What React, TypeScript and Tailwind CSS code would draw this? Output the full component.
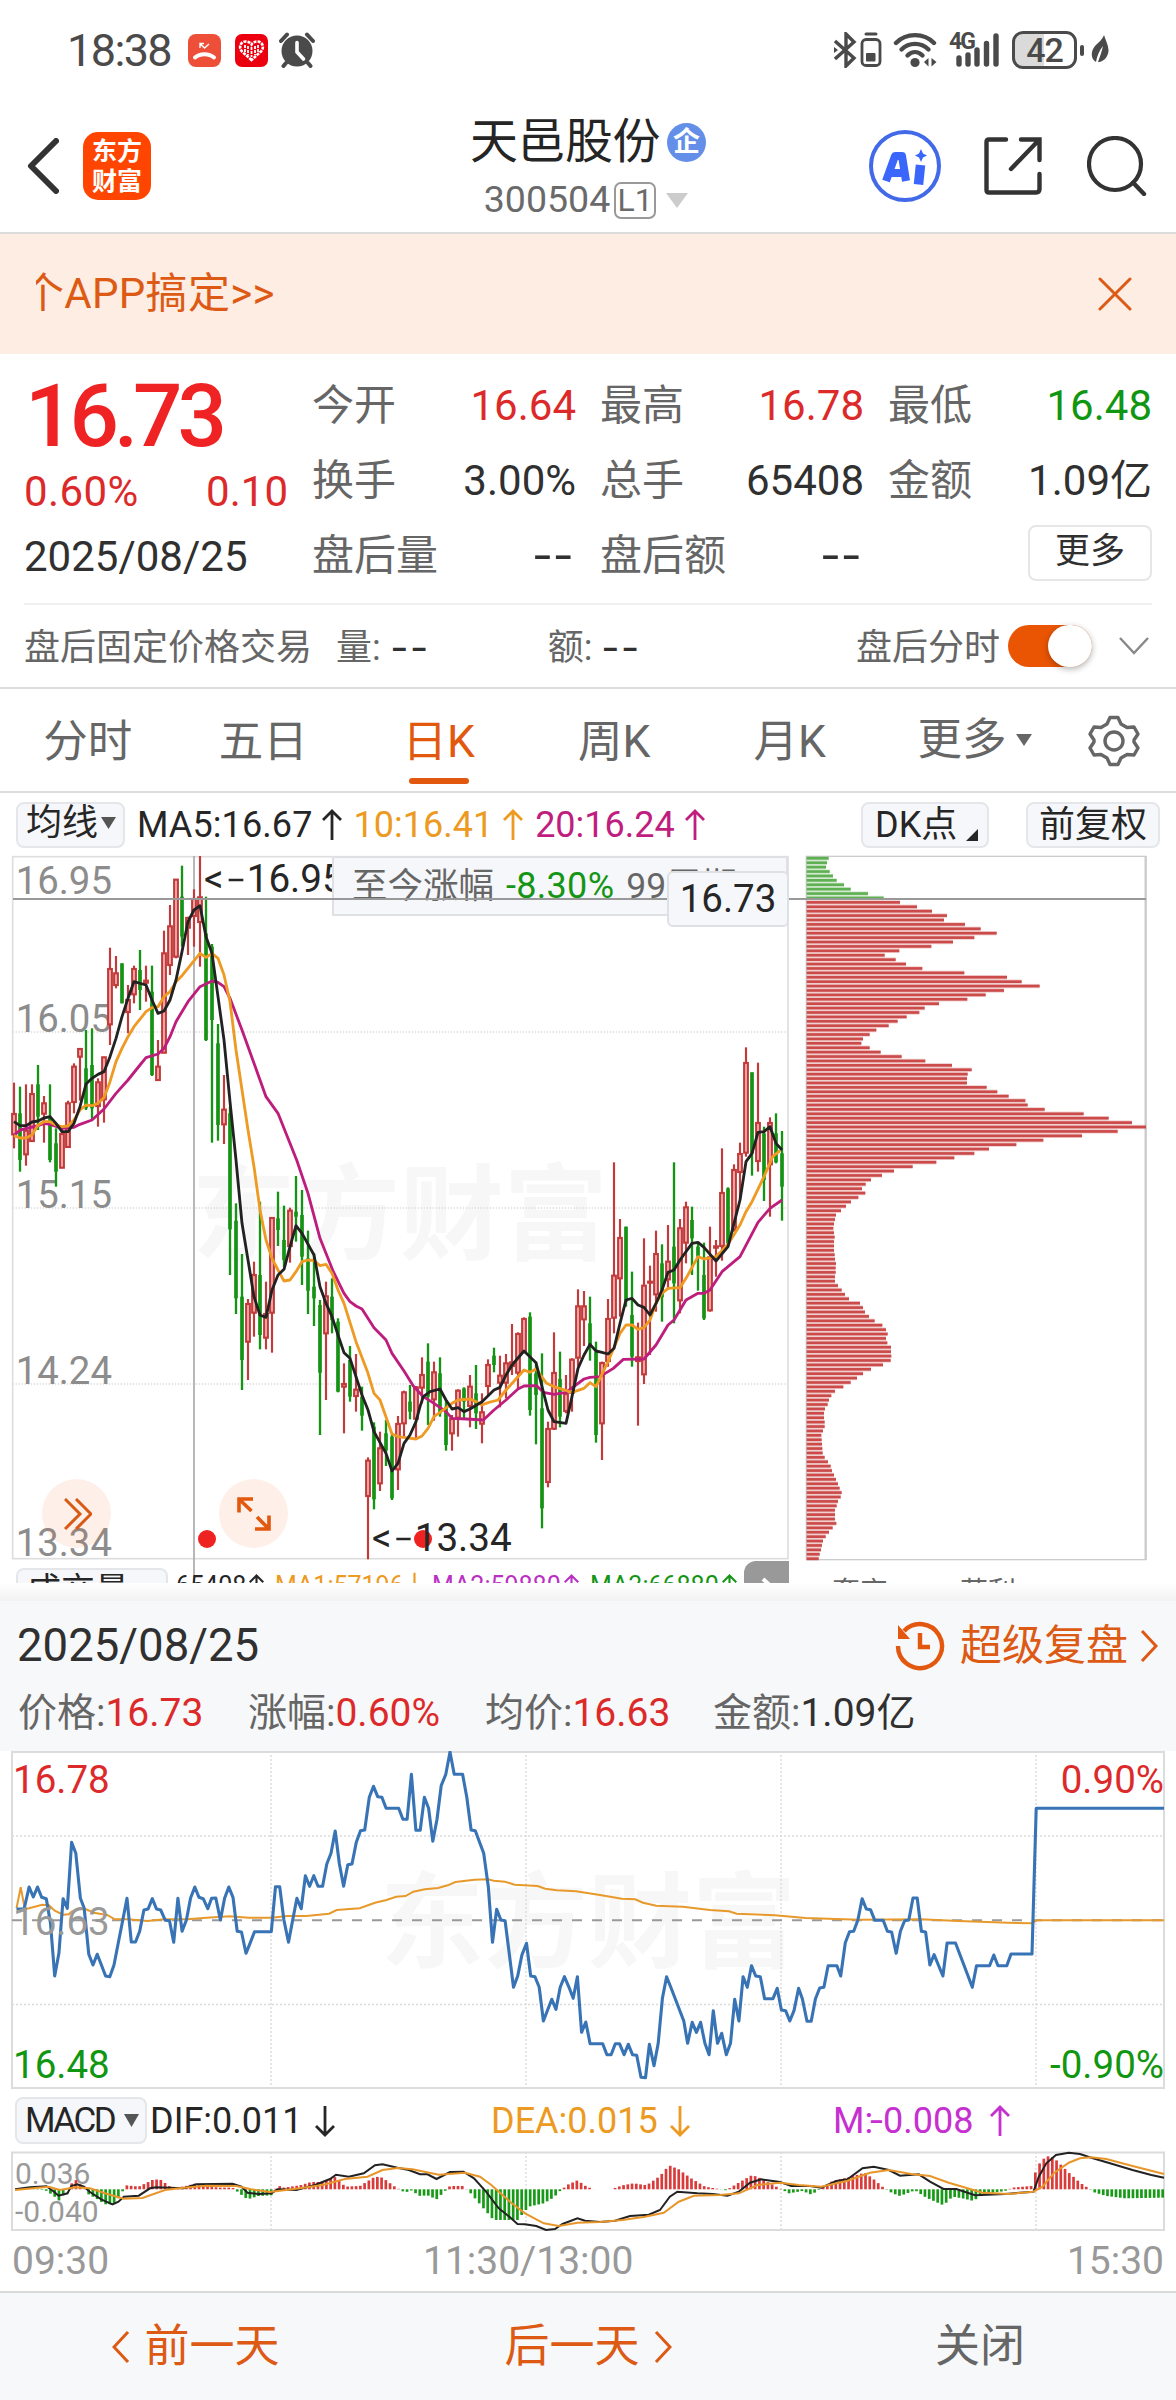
import React, { useState } from "react";

type Point = [number, number];
// high, body top, body bottom, low, rising (1) or falling (0)
type Candle = [number, number, number, number, 0 | 1];

const candles: Candle[] = [
  [1208, 1300, 1365, 1405, 1], [1220, 1300, 1440, 1475, 0], [1213, 1350, 1425, 1457, 1], [1213, 1240, 1385, 1385, 1],
  [1155, 1213, 1310, 1350, 0], [1248, 1268, 1303, 1388, 1], [1213, 1310, 1440, 1447, 0], [1345, 1390, 1475, 1520, 0],
  [1340, 1360, 1465, 1465, 1], [1262, 1268, 1403, 1403, 1], [1150, 1158, 1268, 1300, 1], [1105, 1105, 1132, 1262, 1],
  [1050, 1165, 1285, 1290, 0], [1045, 1155, 1285, 1320, 0], [1195, 1205, 1280, 1340, 1], [1130, 1130, 1260, 1328, 1],
  [803, 865, 1035, 1095, 1], [828, 878, 917, 925, 1], [850, 850, 970, 970, 0], [915, 958, 998, 1060, 1],
  [857, 865, 945, 970, 1], [810, 870, 930, 990, 0], [857, 900, 910, 965, 1], [857, 935, 1185, 1188, 0],
  [1080, 1158, 1202, 1202, 1], [752, 818, 1120, 1120, 1], [675, 737, 857, 885, 1], [597, 597, 832, 835, 1],
  [557, 650, 770, 800, 0], [710, 712, 745, 825, 1], [628, 655, 710, 800, 1], [528, 650, 728, 860, 1],
  [650, 760, 1080, 1083, 0], [792, 800, 1020, 1388, 0], [1032, 1090, 1335, 1382, 0], [1185, 1287, 1335, 1392, 1],
  [1280, 1300, 1648, 1785, 0], [1570, 1622, 1855, 1902, 0], [1722, 1850, 2040, 2130, 0], [1857, 1870, 1987, 2100, 1],
  [1745, 1783, 1900, 1970, 1], [1565, 1785, 1965, 2008, 0], [1805, 1900, 1975, 2008, 1], [1612, 1612, 1900, 2018, 1],
  [1535, 1615, 1650, 1698, 0], [1577, 1680, 1740, 1760, 0], [1583, 1590, 1700, 1748, 1], [1488, 1595, 1610, 1685, 0],
  [1530, 1605, 1730, 1815, 0], [1652, 1735, 1832, 1902, 0], [1720, 1820, 1855, 1938, 0], [1860, 1875, 2078, 2265, 0],
  [1805, 1847, 1962, 2160, 1], [1795, 1850, 1920, 1960, 0], [1915, 1925, 2135, 2137, 0], [2050, 2110, 2122, 2260, 1],
  [1998, 2040, 2150, 2165, 0], [2022, 2127, 2150, 2195, 1], [2120, 2150, 2207, 2252, 0], [2332, 2340, 2450, 2638, 1],
  [2227, 2240, 2458, 2488, 0], [2255, 2303, 2412, 2433, 1], [2220, 2260, 2312, 2358, 0], [2262, 2270, 2455, 2460, 0],
  [2208, 2230, 2370, 2430, 1], [2132, 2135, 2232, 2270, 1], [2115, 2165, 2195, 2218, 0], [2118, 2120, 2218, 2280, 1],
  [2032, 2083, 2125, 2170, 1], [1990, 2045, 2150, 2235, 0], [2045, 2075, 2160, 2222, 1], [2032, 2080, 2200, 2210, 0],
  [2160, 2180, 2295, 2312, 0], [2205, 2215, 2262, 2312, 1], [2128, 2130, 2215, 2270, 1], [2122, 2125, 2165, 2215, 0],
  [2085, 2118, 2180, 2242, 1], [2055, 2140, 2200, 2247, 0], [2140, 2195, 2233, 2290, 1], [2038, 2053, 2120, 2150, 1],
  [2003, 2027, 2055, 2077, 0], [2027, 2085, 2110, 2182, 1], [2022, 2048, 2110, 2155, 1], [1932, 2045, 2060, 2085, 1],
  [1957, 1960, 2080, 2125, 1], [1912, 1915, 2017, 2020, 1], [1897, 1910, 2190, 2207, 0], [2045, 2080, 2145, 2293, 0],
  [2020, 2185, 2485, 2545, 0], [2225, 2245, 2408, 2422, 1], [1957, 2077, 2248, 2250, 1], [2015, 2097, 2210, 2242, 0],
  [2085, 2140, 2195, 2200, 1], [2035, 2037, 2140, 2195, 1], [1828, 1877, 2035, 2060, 1], [1833, 1877, 1920, 1998, 1],
  [1850, 1930, 2000, 2042, 0], [1985, 2015, 2265, 2288, 0], [2045, 2047, 2232, 2340, 1], [1857, 1915, 2045, 2060, 1],
  [1447, 1785, 1915, 1960, 1], [1617, 1672, 1797, 1910, 1], [1640, 1640, 1865, 1880, 0], [1775, 1905, 2030, 2060, 0],
  [1928, 2030, 2045, 2237, 1], [1675, 1815, 2085, 2112, 1], [1757, 1803, 1805, 2025, 1], [1652, 1720, 1845, 1895, 1],
  [1693, 1750, 1852, 1925, 0], [1635, 1743, 1800, 1830, 1], [1447, 1700, 1810, 1930, 0], [1617, 1643, 1863, 1900, 1],
  [1565, 1580, 1690, 1750, 1], [1580, 1620, 1675, 1785, 0], [1690, 1700, 1730, 1832, 0], [1688, 1785, 1915, 1920, 0],
  [1640, 1730, 1893, 1895, 1], [1680, 1697, 1705, 1790, 1], [1405, 1537, 1700, 1742, 1], [1522, 1525, 1690, 1700, 0],
  [1453, 1468, 1650, 1655, 1], [1388, 1420, 1478, 1560, 1], [1102, 1147, 1420, 1430, 1], [1177, 1177, 1420, 1487, 0],
  [1148, 1327, 1445, 1475, 1], [1340, 1360, 1500, 1563, 0], [1312, 1327, 1455, 1610, 1], [1300, 1360, 1447, 1450, 0],
  [1353, 1420, 1520, 1622, 0],
];

const ma5 =
  "42,1325 60,1337 78,1337 96,1326 114,1323 132,1314 150,1310 168,1330 186,1355 204,1355 222,1330 240,1280 258,1212 276,1195 294,1183 312,1175 330,1130 348,1075 366,1010 384,955 402,905 438,915 456,960 474,1000 492,993 510,960 528,900 546,815 564,725 582,690 600,677 618,770 636,820 654,950 672,1080 690,1265 708,1440 726,1630 744,1740 762,1850 780,1905 798,1912 816,1830 834,1785 852,1768 870,1700 888,1637 906,1660 942,1725 960,1820 978,1870 996,1910 1014,1965 1032,2018 1050,2035 1086,2145 1104,2190 1122,2255 1158,2320 1176,2373 1194,2350 1212,2290 1230,2265 1248,2225 1260,2180 1270,2150 1290,2135 1320,2127 1338,2160 1356,2187 1374,2183 1392,2195 1410,2187 1446,2165 1482,2130 1500,2122 1518,2085 1536,2055 1572,2013 1608,2048 1626,2120 1644,2190 1662,2225 1698,2230 1716,2150 1734,2065 1752,2025 1770,1993 1788,2013 1806,2017 1824,2022 1842,2005 1860,1930 1878,1860 1896,1855 1914,1875 1932,1882 1950,1905 1968,1870 1986,1830 2004,1777 2022,1770 2040,1740 2076,1690 2094,1687 2112,1702 2148,1743 2184,1700 2202,1630 2220,1560 2238,1445 2256,1420 2274,1357 2292,1355 2310,1340 2328,1390 2346,1410";
const ma10 =
  "42,1367 60,1374 78,1374 96,1365 114,1335 132,1325 150,1325 168,1335 186,1340 204,1338 222,1320 240,1290 258,1275 276,1277 294,1270 312,1253 330,1205 348,1145 366,1105 384,1070 402,1040 438,995 456,983 474,980 492,950 510,935 528,905 546,887 600,820 618,832 636,820 654,835 672,885 690,965 708,1110 726,1230 744,1350 762,1460 780,1590 798,1680 816,1735 834,1770 852,1803 870,1800 888,1775 906,1745 924,1740 942,1742 960,1757 978,1753 996,1780 1014,1830 1032,1870 1068,1985 1104,2080 1122,2140 1140,2160 1176,2262 1194,2270 1248,2277 1266,2268 1284,2245 1302,2210 1320,2197 1356,2170 1374,2160 1410,2157 1428,2165 1446,2175 1464,2168 1494,2160 1518,2130 1572,2070 1590,2077 1608,2067 1640,2110 1662,2120 1716,2137 1752,2125 1770,2108 1788,2120 1824,2045 1860,1960 1878,1935 1896,1935 1914,1948 1932,1943 1950,1920 1968,1870 1986,1840 2004,1825 2040,1823 2058,1795 2094,1730 2112,1737 2148,1730 2184,1693 2220,1635 2238,1595 2256,1565 2292,1490 2318,1430 2340,1412";
const ma20 =
  "42,1367 60,1350 114,1337 132,1330 150,1333 186,1345 222,1342 240,1333 276,1320 312,1287 348,1240 384,1200 420,1155 438,1133 474,1122 492,1105 510,1070 528,1025 564,965 600,920 636,903 654,907 672,920 690,955 726,1050 762,1150 798,1250 834,1300 890,1440 924,1540 960,1675 1000,1775 1032,1840 1050,1865 1068,1878 1086,1887 1122,1943 1158,1980 1176,2020 1212,2073 1240,2118 1270,2150 1302,2170 1338,2195 1356,2215 1400,2217 1450,2220 1482,2190 1518,2160 1554,2127 1572,2118 1610,2117 1630,2137 1662,2143 1698,2137 1752,2097 1770,2092 1800,2090 1840,2065 1870,2038 1932,2037 1968,1995 2004,1935 2022,1920 2058,1860 2094,1840 2112,1840 2130,1830 2166,1775 2220,1730 2274,1627 2310,1585 2346,1560";

// chip distribution, one bar per price level
const chips = [
  66, 61, 58, 69, 79, 90, 112, 132, 184, 231, 280, 331, 376, 421, 412, 475, 522, 570, 503, 439, 374, 278, 234, 267, 298,
  347, 473, 601, 645, 699, 592, 537, 482, 397, 354, 338, 300, 273, 246, 209, 189, 169, 164, 189, 222, 285, 356, 436, 495,
  483, 481, 481, 540, 572, 606, 656, 663, 714, 831, 906, 976, 1018, 933, 826, 710, 629, 547, 503, 443, 389, 318, 262, 226,
  193, 177, 166, 176, 155, 133, 118, 103, 88, 85, 82, 80, 82, 84, 82, 82, 82, 84, 85, 88, 87, 87, 85, 85, 94, 105, 115,
  127, 160, 169, 175, 187, 204, 227, 238, 243, 238, 242, 253, 253, 254, 252, 229, 193, 169, 151, 132, 110, 85, 74, 67, 63,
  55, 52, 52, 54, 54, 49, 44, 45, 46, 47, 48, 54, 64, 72, 76, 82, 88, 94, 99, 105, 102, 94, 90, 85, 85, 85, 89, 78, 67,
  57, 49, 46, 43, 39, 36,
];

const price: Point[] = [
  [43, 957], [63, 957], [76, 891], [87, 921], [98, 891], [109, 922], [121, 926], [132, 1000], [143, 1158], [154, 1090],
  [165, 926], [176, 955], [187, 757], [198, 790], [210, 925], [220, 955], [232, 1093], [243, 1125], [254, 1093],
  [265, 1125], [276, 1158], [287, 1160], [298, 1125], [309, 1060], [321, 990], [332, 925], [343, 1056], [354, 1056],
  [365, 1024], [376, 960], [387, 957], [398, 926], [409, 957], [420, 960], [432, 991], [443, 992], [454, 1057],
  [465, 925], [476, 1024], [487, 990], [498, 924], [509, 891], [520, 922], [531, 926], [543, 956], [553, 925], [564, 924],
  [576, 990], [587, 925], [598, 891], [609, 922], [620, 1024], [631, 1026], [643, 1090], [654, 1058], [665, 1025],
  [709, 1025], [720, 890], [731, 890], [742, 990], [754, 1057], [765, 990], [776, 925], [787, 956], [798, 857],
  [809, 889], [820, 857], [831, 889], [843, 889], [854, 822], [865, 790], [876, 723], [887, 822], [898, 889], [909, 824],
  [920, 822], [931, 757], [942, 722], [953, 720], [965, 622], [976, 589], [987, 620], [998, 622], [1009, 655],
  [1042, 655], [1053, 688], [1064, 688], [1075, 553], [1087, 721], [1098, 721], [1109, 622], [1120, 655], [1131, 754],
  [1142, 688], [1153, 587], [1165, 553], [1176, 486], [1187, 553], [1209, 553], [1220, 622], [1231, 720], [1242, 722],
  [1264, 790], [1276, 890], [1287, 1057], [1298, 958], [1309, 990], [1320, 992], [1331, 1092], [1342, 1192],
  [1353, 1158], [1364, 1095], [1376, 1060], [1387, 1158], [1398, 1160], [1409, 1192], [1420, 1293], [1431, 1260],
  [1442, 1228], [1453, 1258], [1464, 1192], [1475, 1160], [1487, 1192], [1498, 1225], [1509, 1160], [1520, 1327],
  [1531, 1296], [1542, 1361], [1575, 1361], [1586, 1394], [1597, 1394], [1608, 1361], [1619, 1361], [1631, 1394],
  [1642, 1363], [1653, 1394], [1664, 1396], [1675, 1462], [1687, 1463], [1697, 1363], [1709, 1427], [1720, 1360],
  [1731, 1225], [1742, 1160], [1753, 1192], [1787, 1293], [1797, 1360], [1809, 1297], [1820, 1327], [1831, 1297],
  [1842, 1360], [1853, 1394], [1864, 1262], [1875, 1360], [1886, 1330], [1898, 1394], [1909, 1360], [1920, 1228],
  [1931, 1293], [1942, 1160], [1953, 1192], [1964, 1127], [1975, 1158], [1987, 1160], [1998, 1226], [2020, 1226],
  [2031, 1195], [2042, 1260], [2053, 1262], [2064, 1293], [2075, 1262], [2087, 1195], [2097, 1227], [2109, 1294],
  [2120, 1294], [2131, 1227], [2142, 1194], [2153, 1192], [2164, 1127], [2187, 1127], [2197, 1158], [2209, 1058],
  [2220, 1025], [2231, 1024], [2242, 990], [2253, 926], [2264, 957], [2275, 959], [2286, 991], [2308, 991], [2319, 1024],
  [2330, 1026], [2342, 1090], [2353, 1024], [2364, 992], [2375, 990], [2386, 924], [2397, 924], [2408, 1024],
  [2419, 1026], [2430, 1125], [2441, 1094], [2464, 1158], [2475, 1059], [2497, 1059], [2519, 1125], [2541, 1192],
  [2552, 1127], [2586, 1127], [2597, 1095], [2608, 1127], [2631, 1127], [2642, 1092], [2697, 1092], [2708, 655],
  [3042, 655],
];

const average: Point[] = [
  [43, 955], [54, 892], [65, 957], [76, 955], [110, 944], [128, 946], [143, 962], [165, 974], [180, 973], [187, 965],
  [205, 957], [225, 958], [245, 968], [280, 975], [300, 988], [335, 988], [385, 993], [430, 988], [490, 988], [540, 983],
  [600, 979], [650, 983], [710, 983], [750, 978], [800, 978], [860, 971], [880, 960], [940, 955], [980, 938],
  [1010, 930], [1035, 920], [1060, 918], [1080, 905], [1110, 898], [1145, 894], [1170, 886], [1190, 876], [1240, 869],
  [1275, 868], [1290, 872], [1320, 875], [1345, 884], [1405, 888], [1425, 896], [1455, 901], [1505, 904], [1568, 915],
  [1625, 926], [1660, 928], [1680, 938], [1715, 947], [1785, 950], [1855, 960], [1905, 964], [1925, 971], [2025, 976],
  [2105, 984], [2245, 989], [2405, 988], [2505, 993], [2635, 998], [2695, 1000], [2710, 991], [3042, 991],
];

const dif: Point[] = [
  [20, 328], [40, 322], [62, 319], [72, 335], [78, 347], [90, 340], [95, 318], [103, 313], [112, 320], [120, 336],
  [135, 358], [150, 373], [158, 365], [165, 350], [185, 347], [200, 325], [208, 322], [245, 325], [262, 313], [310, 311],
  [322, 320], [330, 338], [345, 342], [362, 340], [370, 328], [395, 330], [420, 315], [440, 297], [448, 284], [465, 290],
  [485, 280], [500, 256], [510, 253], [530, 263], [545, 270], [560, 283], [570, 283], [582, 297], [600, 276], [618, 275],
  [632, 295], [648, 335], [665, 385], [680, 412], [690, 432], [700, 433], [715, 438], [728, 450], [740, 447], [750, 432],
  [770, 415], [780, 422], [800, 426], [820, 422], [840, 408], [865, 404], [880, 390], [893, 350], [903, 335], [930, 340],
  [950, 342], [970, 347], [985, 335], [1000, 308], [1015, 298], [1040, 306], [1055, 318], [1080, 318], [1095, 323],
  [1115, 303], [1130, 298], [1150, 265], [1165, 260], [1185, 270], [1200, 287], [1225, 283], [1240, 305], [1258, 327],
  [1275, 327], [1300, 346], [1340, 342], [1378, 335], [1385, 290], [1395, 250], [1408, 225], [1425, 218], [1440, 222],
  [1455, 233], [1480, 250], [1510, 270], [1535, 285], [1552, 293],
];

const dea: Point[] = [
  [20, 330], [65, 320], [80, 330], [100, 322], [120, 325], [140, 340], [165, 356], [190, 354], [220, 330], [245, 323],
  [275, 317], [315, 318], [335, 328], [360, 336], [400, 325], [430, 315], [460, 297], [490, 290], [510, 270], [530, 264],
  [550, 268], [585, 284], [620, 278], [640, 290], [655, 315], [680, 365], [700, 400], [725, 430], [745, 438], [770, 428],
  [800, 426], [830, 420], [860, 410], [885, 398], [905, 365], [925, 347], [960, 345], [985, 340], [1010, 315],
  [1040, 308], [1065, 315], [1095, 320], [1130, 302], [1160, 278], [1185, 270], [1215, 282], [1240, 288], [1265, 308],
  [1290, 325], [1310, 338], [1345, 342], [1378, 335], [1390, 320], [1405, 280], [1425, 248], [1440, 235], [1455, 232],
  [1475, 237], [1510, 258], [1552, 282],
];

const histogram: Point[] = [
  [22, 2], [60, -2], [72, -20], [78, -35], [88, -8], [94, 15], [101, 28], [110, 8], [118, -15], [130, -30], [140, -45],
  [152, -45], [160, -20], [168, 12], [185, 8], [205, 30], [215, 28], [225, 10], [235, 5], [248, 10], [262, 18], [280, 8],
  [292, 5], [310, 5], [318, -10], [330, -30], [345, -20], [362, -18], [370, 12], [378, 5], [400, 12], [415, 22],
  [432, 22], [448, 38], [460, 8], [480, 10], [500, 38], [510, 35], [525, 10], [540, -10], [548, -3], [560, -20],
  [570, -18], [582, -30], [592, -8], [600, 10], [617, 10], [625, -5], [640, -45], [658, -92], [690, -92], [705, -52],
  [725, -42], [738, -25], [748, -2], [758, 15], [770, 27], [782, 8], [792, 0], [815, 0], [830, 12], [845, 18], [862, 12],
  [880, 40], [892, 72], [905, 60], [920, 35], [940, 8], [968, -3], [985, 20], [1003, 43], [1015, 32], [1035, 8],
  [1052, -12], [1070, -5], [1082, -16], [1095, 3], [1110, 25], [1130, 35], [1153, 50], [1165, 30], [1178, 5],
  [1190, -12], [1200, -20], [1220, -3], [1235, -25], [1258, -48], [1270, -22], [1285, -28], [1298, -35], [1310, -15],
  [1340, -5], [1350, 5], [1375, 10], [1383, 70], [1395, 100], [1405, 95], [1425, 50], [1440, 20], [1452, 2],
  [1460, -10], [1475, -20], [1500, -27], [1552, -25],
];

const toPolyline = (points: Point[], scaleX: number, top: number) =>
  points.map(([x, y]) => `${(x / scaleX).toFixed(1)},${(y / 3 - top).toFixed(1)}`).join(" ");

const valueAt = (points: Point[], x: number) => {
  const next = points.findIndex((p) => p[0] >= x);
  if (next <= 0) return points[0][1];
  const [x0, y0] = points[next - 1];
  const [x1, y1] = points[next];
  return y0 + ((y1 - y0) * (x - x0)) / (x1 - x0);
};

const stats = [
  [
    { label: "今开", value: "16.64", color: "text-[#dc2a2a]" },
    { label: "最高", value: "16.78", color: "text-[#dc2a2a]" },
    { label: "最低", value: "16.48", color: "text-[#119611]" },
  ],
  [
    { label: "换手", value: "3.00%", color: "text-[#303030]" },
    { label: "总手", value: "65408", color: "text-[#303030]" },
    { label: "金额", value: "1.09亿", color: "text-[#303030]" },
  ],
];

const tabs = ["分时", "五日", "日K", "周K", "月K"];

const Caret = ({ className }: { className: string }) => (
  <svg viewBox="0 0 16 13" preserveAspectRatio="none" fill="currentColor" className={className}>
    <path d="M0 0H16L8 13Z" />
  </svg>
);

const Arrow = ({ down = false, className = "h-8 w-5" }: { down?: boolean; className?: string }) => (
  <svg
    viewBox="0 0 20 32"
    fill="none"
    stroke="currentColor"
    strokeWidth="2.8"
    className={`shrink-0 ${down ? "rotate-180" : ""} ${className}`}
  >
    <path d="M10 31V2M1 11L10 2L19 11" />
  </svg>
);

const Chevron = ({ left = false, className = "" }: { left?: boolean; className?: string }) => (
  <svg
    viewBox="0 0 18 32"
    fill="none"
    stroke="currentColor"
    strokeWidth="3"
    className={`h-8 w-[18px] shrink-0 ${left ? "rotate-180" : ""} ${className}`}
  >
    <path d="M2 1L16 16L2 31" />
  </svg>
);

const StatusBar = () => (
  <div className="flex h-[100px] items-center pl-[67px] text-[#4a4a4a]">
    <span className="w-[121px] text-[45px] tracking-[-1.6px]">18:38</span>
    <svg viewBox="0 0 33 33" className="h-[33px] w-[33px]">
      <rect width="33" height="33" rx="8" fill="#ee4f38" />
      <path d="M7 23.500c5-4.500 14-4.500 19 0" fill="none" stroke="#fff" strokeWidth="4" strokeLinecap="round" />
      <path d="M12 14V9.500H16M12.500 10L16.500 14L21 10" fill="none" stroke="#fff" strokeWidth="1.400" />
    </svg>
    <svg viewBox="0 0 33 33" className="ml-[14px] h-[33px] w-[33px]">
      <rect width="33" height="33" rx="7" fill="#ec0010" />
      <path
        d="M16.500 26L7 17.500C3 13 6 7.500 10.500 7.500C13.500 7.500 15.500 9 16.500 10.500C17.500 9 19.500 7.500 22.500 7.500C27 7.500 30 13 26 17.500Z"
        fill="none"
        stroke="#fff"
        strokeWidth="2.600"
        strokeDasharray="3 1"
      />
      <path d="M10 11V18M13 12V21M16.500 13V23M20 12V21M23 11V18" stroke="#fff" strokeWidth="1.800" strokeDasharray="3 1" />
    </svg>
    <svg viewBox="0 0 36 36" className="ml-[11px] h-9 w-9">
      <circle cx="18" cy="19" r="15.500" fill="#4a4a4a" />
      <path d="M2 9L8 2.500M34 9L28 2.500M7 31L4.500 34M29 31L31.500 34" stroke="#4a4a4a" strokeWidth="4" strokeLinecap="round" />
      <path d="M18 10.500V20L24.500 27" fill="none" stroke="#fff" strokeWidth="3.600" strokeLinecap="round" />
    </svg>

    <div className="ml-auto flex items-center pr-[67px]">
      <svg viewBox="0 0 48 36" className="h-9 w-12">
        <path d="M1 9L20 26L12 34V2L20 10L1 27" fill="none" stroke="#4a4a4a" strokeWidth="3.400" />
        <path d="M0 15L4 18L0 21Z" fill="#4a4a4a" />
        <rect x="28" y="7.500" width="18" height="26" rx="4" fill="none" stroke="#4a4a4a" strokeWidth="2.800" />
        <rect x="32" y="21" width="9.500" height="8.500" rx="1" fill="#4a4a4a" />
        <path d="M32 2H42" stroke="#4a4a4a" strokeWidth="3" strokeLinecap="round" />
      </svg>
      <svg viewBox="0 0 46 36" className="ml-[11px] h-9 w-[46px]">
        <g fill="none" stroke="#4a4a4a" strokeWidth="4.400" strokeLinecap="round">
          <path d="M3 11C13 .5 31 .5 41 11" />
          <path d="M8.500 17.500C16 10 28 10 35.500 17.500" />
          <path d="M14.500 23.500C19 19 25 19 29.500 23.500" />
        </g>
        <circle cx="22" cy="30.500" r="4.600" fill="#4a4a4a" />
        <path d="M35.500 26V34.500L31 30ZM38.500 26V34.500L43.500 30Z" fill="#4a4a4a" />
      </svg>
      <div className="relative ml-[10px] h-9 w-[51px]">
        <svg viewBox="0 0 51 36" className="h-9 w-[51px]">
          <path
            d="M10 26V32M19 23V32M28 18V32M37.500 11.500V32M47 4V32"
            stroke="#4a4a4a"
            strokeWidth="5.400"
            strokeLinecap="round"
          />
        </svg>
        <span className="absolute left-0 top-0 text-[23px] font-bold leading-[20px] tracking-[-2px]">4G</span>
      </div>
      <div className="ml-[12px] flex h-[38px] w-[65px] items-center justify-center rounded-[11px] border-[3px] border-[#4a4a4a] bg-linear-to-r from-[#dadada] from-50% to-white to-50% text-[34px] font-medium tracking-[-1px]">
        42
      </div>
      <div className="ml-[3px] h-[11px] w-1 rounded-sm bg-[#4a4a4a]" />
      <svg viewBox="0 0 18 30" className="ml-[7px] h-[30px] w-[18px]">
        <path d="M13 0C15 7 20 14 16 21C14 25 10 27 7 27C9 21 11 16 12 11C8 16 6 21 5 27C-1 23 0 16 4 11C8 7 11 5 13 0Z" fill="#4a4a4a" />
      </svg>
    </div>
  </div>
);

const Header = () => (
  <header className="grid h-[134px] grid-cols-3 border-b-2 border-[#dcdcdc]">
    <div className="flex items-center pl-[27px]">
      <svg viewBox="0 0 32 56" className="h-14 w-8">
        <path d="M29 3L4 28L29 53" fill="none" stroke="#333" strokeWidth="6" strokeLinecap="round" strokeLinejoin="round" />
      </svg>
      <div className="ml-6 flex h-[68px] w-[68px] flex-col items-center justify-center rounded-[15px] bg-[#ff4500] pt-[1px] text-[25px] font-bold leading-[30px] text-white">
        <span>东方</span>
        <span>财富</span>
      </div>
    </div>
    <div className="flex flex-col items-center pt-[13px]">
      <div className="flex h-[58px] items-center text-[#252525]">
        <span className="text-[48px] tracking-[-0.5px]">天邑股份</span>
        <span className="ml-[7px] flex h-[39px] w-[39px] items-center justify-center rounded-full bg-[#648fe9] text-[27px] font-bold text-white">
          企
        </span>
      </div>
      <div className="mr-[4px] mt-[9px] flex h-10 items-center text-[#6a6a6a]">
        <span className="text-[37.500px]">300504</span>
        <span className="ml-1 flex h-[37px] w-[42px] items-center justify-center rounded-[7px] border-2 border-[#999] text-[32px]">
          L1
        </span>
        <Caret className="ml-[10px] h-[15px] w-[22px] text-[#ccc]" />
      </div>
    </div>
    <div className="flex items-center justify-end pr-[29px]">
      <div className="flex h-[72px] w-[72px] items-center justify-center rounded-full border-4 border-[#4169e8]">
        <svg viewBox="0 0 72 72" className="h-[72px] w-[72px] shrink-0">
          <path
            d="M17 51L26 26H33L37 51M22 43H35"
            fill="none"
            stroke="#3a66fb"
            strokeWidth="8"
            strokeLinejoin="round"
          />
          <path d="M51.500 35L49.500 54.500" stroke="#3a66fb" strokeWidth="9.500" />
          <path d="M52 19L54 23.500L58 25.500L54 27.500L52 32L50 27.500L46 25.500L50 23.500Z" fill="#3a66fb" />
        </svg>
      </div>
      <svg viewBox="0 0 58 58" className="ml-[43px] h-[58px] w-[58px]">
        <path
          d="M22 2.500H5Q2.500 2.500 2.500 5V53Q2.500 55.500 5 55.500H52Q55.500 55.500 55.500 52V37M37 2.500H55.500V23M54 4L27 32"
          fill="none"
          stroke="#333"
          strokeWidth="4.400"
          strokeLinecap="round"
        />
      </svg>
      <svg viewBox="0 0 60 60" className="ml-[45px] h-[60px] w-[60px]">
        <circle cx="28" cy="28" r="26" fill="none" stroke="#333" strokeWidth="4.200" />
        <path d="M46 46.500L57 58" stroke="#333" strokeWidth="4.400" strokeLinecap="round" />
      </svg>
    </div>
  </header>
);

const Quote = () => (
  <section className="grid h-[249px] grid-cols-4 gap-x-6 px-6 pt-[14px] text-[42px]">
    <div>
      <div className="flex h-[97px] items-center pl-[1px] text-[87px] font-medium tracking-[-5px] text-[#ef2323]">
        16.73
      </div>
      <div className="flex h-[54px] items-center justify-between text-[#dc2a2a]">
        <span className="tracking-[0.4px]">0.60%</span>
        <span>0.10</span>
      </div>
      <div className="flex h-[75px] items-center text-[#303030]">2025/08/25</div>
    </div>
    <div className="col-span-3 grid grid-cols-3 grid-rows-[75px_75px_75px] gap-x-6 text-[#666]">
      {stats.flat().map((item) => (
        <div key={item.label} className="flex items-center justify-between">
          <span>{item.label}</span>
          <span className={item.color}>{item.value}</span>
        </div>
      ))}
      <div className="flex items-center justify-between">
        盘后量
        <span className="origin-right scale-x-[1.28] text-[48px] tracking-[3px] text-[#303030]">--</span>
      </div>
      <div className="flex items-center justify-between">
        盘后额
        <span className="origin-right scale-x-[1.28] text-[48px] tracking-[3px] text-[#303030]">--</span>
      </div>
      <div className="flex items-center justify-end">
        <button className="-mt-[5px] h-[56px] w-[124px] rounded-lg border-2 border-[#e6e6e6] pb-1 text-[35px] text-[#303030]">
          更多
        </button>
      </div>
    </div>
  </section>
);

const AfterHours = () => {
  const [enabled, setEnabled] = useState(true);
  return (
    <section className="border-b-2 border-[#dcdcdc]">
      <div className="mx-6 flex h-[84px] items-center border-t-2 border-[#efefef] pt-[3px] text-[36px] text-[#666]">
        <span className="w-[312px]">盘后固定价格交易</span>
        <span>量:</span>
        <span className="ml-[11px] w-[156px]">
          <span className="inline-block origin-left scale-x-[1.24] text-[43px] tracking-[4px] text-[#303030]">--</span>
        </span>
        <span>额:</span>
        <span className="ml-[11px] origin-left scale-x-[1.24] text-[43px] tracking-[4px] text-[#303030]">--</span>
        <span className="ml-auto">盘后分时</span>
        <div
          className="-mt-[3px] ml-2 flex h-[42px] w-[84px] cursor-pointer justify-end rounded-full bg-[#ea5504]"
          onClick={() => setEnabled(!enabled)}
        >
          {enabled && <span className="h-[42px] w-[44px] rounded-full bg-white shadow-[0_2px_6px_rgba(0,0,0,0.3)]" />}
        </div>
        <svg viewBox="0 0 30 20" className="-mt-[3px] ml-[27px] mr-[3px] h-5 w-[30px]">
          <path d="M1 2L15 17L29 2" fill="none" stroke="#888" strokeWidth="2.400" />
        </svg>
      </div>
    </section>
  );
};

const Tabs = () => {
  const [active, setActive] = useState("日K");
  return (
    <nav className="flex h-[104px] border-b-2 border-[#dcdcdc] text-[44.500px] text-[#666]">
      {tabs.map((tab) => (
        <div
          key={tab}
          className={`flex w-[175.500px] flex-col items-center pt-[25px] ${tab === active ? "text-[#e2580e]" : ""}`}
          onClick={() => setActive(tab)}
        >
          <span className="h-[64px] leading-[56px]">{tab}</span>
          {tab === active && <span className="h-[6px] w-[60px] rounded-full bg-[#e2580e]" />}
        </div>
      ))}
      <div className="flex w-[190px] items-center justify-center pl-1">
        更多
        <Caret className="ml-[9px] h-3 w-4" />
      </div>
      <svg viewBox="0 0 54 54" className="ml-[19px] mt-[25px] h-[54px] w-[54px]" fill="none" stroke="#666" strokeWidth="3.400">
        <path
          d="M23 3.500H31L34 10L40 13.500L47 13L51 20L47 26V28L51 34L47 41L40 40.500L34 44L31 50.500H23L20 44L14 40.500L7 41L3 34L7 28V26L3 20L7 13L14 13.500L20 10Z"
          strokeLinejoin="round"
        />
        <circle cx="27" cy="27" r="9" />
      </svg>
    </nav>
  );
};

const Toolbar = () => (
  <div className="flex h-[63px] items-center pl-4 pr-4 text-[36px] text-[#262626]">
    <button className="flex h-[46px] w-[109px] items-center rounded-lg border-2 border-[#e5e6ea] bg-[#f6f7fa] pb-[3px] pl-[8px]">
      均线
      <Caret className="ml-[3px] h-[12px] w-[15px] text-[#555]" />
    </button>
    <span className="ml-[12px] tracking-[0.1px]">MA5:16.67</span>
    <Arrow className="ml-[9px] h-8 w-5" />
    <span className="ml-[12px] text-[#ec9a22]">10:16.41</span>
    <Arrow className="ml-[10px] h-8 w-5 text-[#ec9a22]" />
    <span className="ml-[12px] text-[#c01e7e]">20:16.24</span>
    <Arrow className="ml-[10px] h-8 w-5 text-[#c01e7e]" />
    <button className="ml-auto flex h-[46px] w-[128px] items-center rounded-lg border-2 border-[#e5e6ea] bg-[#f6f7fa] pl-[12px]">
      DK点
      <svg viewBox="0 0 12 12" className="ml-[9px] mt-[20px] h-3 w-3 shrink-0">
        <path d="M12 0V12H0Z" fill="#262626" />
      </svg>
    </button>
    <button className="ml-[37px] h-[46px] w-[134px] rounded-lg border-2 border-[#e5e6ea] bg-[#f6f7fa]">前复权</button>
  </div>
);

const KLineChart = () => {
  const pitch = 2101 / (chips.length - 1);
  return (
    <div className="relative h-[704px]">
      {/* three drawing units per pixel, chart frame starts at y = 528 */}
      <svg viewBox="0 528 3528 2112" className="h-[704px] w-[1176px] overflow-visible">
        <text x="575" y="1716" fontSize="312" fontWeight="700" fill="#f7f7f7">
          东方财富
        </text>
        <g stroke="#dcdcdc" strokeWidth="4" strokeDasharray="4 5">
          <path d="M38 1056H2364M38 1584H2364M38 2112H2364" />
        </g>
        <rect x="38" y="530" width="2326" height="2106" fill="none" stroke="#dedede" strokeWidth="5" />
        <path d="M582 528V2709" stroke="#aaa" strokeWidth="5" />

        <g fill="#8c8c8c" fontSize="115">
          <text x="47" y="641">16.95</text>
          <text x="47" y="1055">16.05</text>
          <text x="47" y="1584">15.15</text>
          <text x="47" y="2112">14.24</text>
          <text x="47" y="2628">13.34</text>
        </g>

        {candles.map(([high, top, bottom, low, up], i) => {
          const x = 42 + i * 18;
          return up ? (
            <g key={i} stroke="#c23a3a" strokeWidth="6.500" fill="#f6c9c9">
              <path d={`M${x} ${high}V${low}`} />
              <rect x={x - 5.500} y={top + 2} width="11" height={Math.max(bottom - top - 4, 3)} />
            </g>
          ) : (
            <g key={i} stroke="#159315">
              <path d={`M${x} ${high}V${low}`} strokeWidth="7" />
              <path d={`M${x} ${top}V${bottom}`} strokeWidth="11" />
            </g>
          );
        })}
        <g fill="none" strokeWidth="8.500" strokeLinejoin="round">
          <polyline points={ma20} stroke="#bd1d7c" />
          <polyline points={ma10} stroke="#ee9a23" />
          <polyline points={ma5} stroke="#222" />
        </g>

        <circle cx="621" cy="2577" r="27" fill="#ef2222" />
        <circle cx="1269" cy="2577" r="27" fill="#ef2222" />
        <g fill="#262626" fontSize="116">
          <text x="612" y="637">&lt;</text>
          <text x="740" y="637">16.95</text>
          <text x="1116" y="2613">&lt;</text>
          <text x="1244" y="2613">13.34</text>
        </g>
        <path d="M686 600H730M1189 2577H1232" stroke="#262626" strokeWidth="8" />

        <rect x="2419" y="529" width="1018" height="2110" fill="#fff" stroke="#ccc" strokeWidth="4" />
        <path d="M3437 528V2640" stroke="#ccc" strokeWidth="7" />
        {chips.map((width, i) => {
          const y = 535 + i * pitch;
          return (
            <g key={i} fill={i < 10 ? "#5fb052" : "#cb4b4b"}>
              <rect x="2420" y={y - pitch / 2} width={width} height={pitch} opacity="0.28" />
              <rect x="2420" y={y - 4} width={width} height="8" />
            </g>
          );
        })}
      </svg>

      <div className="absolute left-[332px] top-0 flex h-[60px] w-[456px] items-start border-2 border-[#dfe0e3] bg-[#f6f7fa] pl-[18px] pt-[2px] text-[35.500px] leading-[52px] text-[#666]">
        <span>至今涨幅</span>
        <span className="ml-[12px] text-[36px] tracking-[0.3px] text-[#159515]">-8.30%</span>
        <span className="ml-[12px]">99周期</span>
      </div>
      <div className="absolute left-[13px] top-[42px] h-[2px] w-[1133px] bg-[#999]" />
      <div className="absolute left-[667px] top-[15px] flex h-[56px] w-[122px] items-center justify-center rounded-md border-2 border-[#dfe0e3] bg-[#f6f7fa] text-[38.500px] text-[#262626]">
        16.73
      </div>
      <div className="absolute left-[42px] top-[623px] flex h-[69px] w-[69px] items-center justify-center rounded-full bg-[#f96c1c]/10">
        <svg viewBox="0 0 28 32" className="ml-[3px] h-8 w-7" fill="none" stroke="#d95a16" strokeWidth="3">
          <path d="M1 1L16 16L1 31M12 1L27 16L12 31" />
        </svg>
      </div>
      <div className="absolute left-[219px] top-[623px] flex h-[69px] w-[69px] items-center justify-center rounded-full bg-[#fef0e8]">
        <svg viewBox="0 0 34 34" className="h-[34px] w-[34px]" fill="none" stroke="#e2580e" strokeWidth="3.600">
          <path d="M2 15.500V2H16M3 3L14.500 14M32 18.500V32H18M31 31L20 20" />
        </svg>
      </div>
    </div>
  );
};

const VolumeStrip = () => (
  <div className="relative flex h-[23px] items-start overflow-hidden pl-4 text-[25px] leading-[42px]">
    <span className="mt-[8px] h-[46px] w-[152px] shrink-0 rounded-lg border-2 border-[#e5e6ea] bg-[#f6f7fa] pl-[9px] text-[34px] leading-[40px] text-[#262626]">
      成交量
    </span>
    <span className="ml-[8px] mt-[5px] flex w-[99px] shrink-0 text-[#262626]">
      65408
      <Arrow className="ml-[3px] mt-[9px] h-6 w-[15px]" />
    </span>
    <span className="mt-[5px] flex w-[157px] shrink-0 text-[#ec9a22]">
      MA1:57196
      <Arrow down className="ml-[3px] mt-[7px] h-6 w-[15px]" />
    </span>
    <span className="mt-[5px] flex w-[158px] shrink-0 text-[#bb30c4]">
      MA2:59880
      <Arrow className="ml-[3px] mt-[9px] h-6 w-[15px]" />
    </span>
    <span className="mt-[5px] flex shrink-0 text-[#159515]">
      MA3:66880
      <Arrow className="ml-[3px] mt-[9px] h-6 w-[15px]" />
    </span>
    <div className="absolute left-[744px] top-[1px] h-11 w-[45px] rounded-tl-xl bg-[#999]">
      <svg viewBox="0 0 45 44" className="h-11 w-[45px]">
        <path d="M19 18L32 30L19 42" fill="none" stroke="#fff" strokeWidth="4" />
      </svg>
    </div>
    <span className="absolute left-[832px] top-[12px] text-[28px]  text-[#666]">套牢</span>
    <span className="absolute left-[960px] top-[12px] text-[28px] text-[#666]">获利</span>
  </div>
);

const ReplayHeader = () => (
  <div className="h-[150px] bg-[#f7f8fa] pt-[16px] text-[#303030]">
    <div className="flex h-[58px] items-center pl-[17px] pr-[18px]">
      <span className="text-[45.500px]">2025/08/25</span>
      <svg viewBox="0 0 50 50" className="ml-auto h-[50px] w-[50px]" fill="none" stroke="#e2580e" strokeWidth="4.400">
        <path d="M3 25A22 22 0 1 0 9 10" />
        <path d="M3 4V18H15Z" fill="#e2580e" stroke="none" />
        <path d="M25 12V26H35" />
      </svg>
      <span className="ml-[15px] text-[42px] text-[#dd5a14]">超级复盘</span>
      <Chevron className="ml-[12px] text-[#dd5a14]" />
    </div>
    <div className="mt-[8px] flex h-[60px] items-center pl-[18px] text-[39px]">
      <span className="w-[230px]">
        <span className="text-[#666]">价格:</span>
        <span className="text-[#dc2a2a]">16.73</span>
      </span>
      <span className="w-[237px]">
        <span className="text-[#666]">涨幅:</span>
        <span className="text-[#dc2a2a]">0.60%</span>
      </span>
      <span className="w-[228px]">
        <span className="text-[#666]">均价:</span>
        <span className="text-[#dc2a2a]">16.63</span>
      </span>
      <span>
        <span className="text-[#666]">金额:</span>1.09亿
      </span>
    </div>
  </div>
);

const MinuteChart = () => (
  <svg viewBox="0 0 1176 338" className="h-[338px] w-[1176px]">
    <text x="380" y="209" fontSize="104" fontWeight="700" fill="#f7f7f7">
      东方财富
    </text>
    <g stroke="#dadada" strokeWidth="1.400" strokeDasharray="2 2">
      <path d="M12 85H1164M12 253.500H1164M271 0V337M526 0V337M781 0V337M1036 0V337" />
    </g>
    <path d="M12 1H1164V337H12Z" fill="none" stroke="#dcdcdc" strokeWidth="2" />
    <path d="M12 169.300H1164" stroke="#999" strokeWidth="2" strokeDasharray="10 10" />
    <polyline points={toPolyline(average, 2.6133, 161)} fill="none" stroke="#e8992c" strokeWidth="2" />
    <polyline
      points={toPolyline(price, 2.6133, 161)}
      fill="none"
      stroke="#3874b5"
      strokeWidth="3.100"
      strokeLinejoin="round"
    />
    <g fontSize="38.500">
      <text x="13" y="42" fill="#dc2a2a">16.78</text>
      <text x="13" y="184" fill="#999">16.63</text>
      <text x="13" y="327" fill="#119611">16.48</text>
      <text x="1164" y="42" fill="#dc2a2a" textAnchor="end">0.90%</text>
      <text x="1164" y="327" fill="#119611" textAnchor="end">-0.90%</text>
    </g>
  </svg>
);

const MacdChart = () => (
  <svg viewBox="0 0 1176 81" className="h-[81px] w-[1176px]">
    <path d="M271 1V79M526 1V79M781 1V79M1036 1V79" stroke="#dadada" strokeWidth="1.400" strokeDasharray="2 2" />
    <path d="M12 1.500H1164V79H12Z" fill="none" stroke="#dcdcdc" strokeWidth="2" />
    <g fontSize="30" fill="#999">
      <text x="15" y="33">0.036</text>
      <text x="15" y="71">-0.040</text>
    </g>
    {Array.from({ length: 271 }, (_, i) => {
      const x = 22 + i * 5.66;
      const height = valueAt(histogram, Math.min(x, 1552)) / 3;
      return (
        <path
          key={i}
          d={`M${x / 1.3333} 38.300v${-height}`}
          stroke={height > 0 ? "#d93a3a" : "#189a18"}
          strokeWidth="2.700"
        />
      );
    })}
    <g fill="none" strokeWidth="2">
      <polyline points={toPolyline(dif, 1.3333, 71)} stroke="#222" />
      <polyline points={toPolyline(dea, 1.3333, 71)} stroke="#e8962a" />
    </g>
  </svg>
);

const App: React.FC<{}> = () => {
  const [bannerOpen, setBannerOpen] = useState(true);
  return (
    <div className="h-[2400px] w-[1176px] overflow-hidden bg-white font-[Roboto,'Noto_Sans_CJK_SC',sans-serif] leading-none">
      <StatusBar />
      <Header />
      {bannerOpen && (
        <div className="flex h-[120px] items-center justify-between bg-[#fdede3] pl-9 pr-[44px] text-[42px] text-[#dd5a14]">
          <div className="overflow-hidden leading-[60px]">
            <span className="-ml-[14px] block tracking-[0.3px]">个APP搞定&gt;&gt;</span>
          </div>
          <svg viewBox="0 0 34 34" className="h-[34px] w-[34px]" onClick={() => setBannerOpen(false)}>
            <path d="M2 2L32 32M32 2L2 32" stroke="#dd5a14" strokeWidth="3" strokeLinecap="round" />
          </svg>
        </div>
      )}
      <Quote />
      <AfterHours />
      <Tabs />
      <Toolbar />
      <KLineChart />
      <VolumeStrip />
      <div className="h-[18px] bg-linear-to-b from-white to-[#f2f2f2]" />
      <ReplayHeader />
      <MinuteChart />
      <div className="flex h-[62px] items-center pl-[15px] pt-[1px] text-[36px] text-[#262626]">
        <button className="flex h-[47px] w-[132px] items-center rounded-lg border-2 border-[#e5e6ea] bg-[#f6f7fa] pl-[8px] text-[35px] tracking-[-2.500px]">
          MACD
          <Caret className="ml-[10px] h-[13px] w-[15px] text-[#555]" />
        </button>
        <span className="flex w-[344px] items-center pl-[3px]">
          DIF:0.011
          <Arrow down className="ml-[13px] h-8 w-5" />
        </span>
        <span className="flex w-[342px] items-center text-[#ec9a22]">
          DEA:0.015
          <Arrow down className="ml-[12px] h-8 w-5" />
        </span>
        <span className="flex items-center text-[#c62fd0]">
          M:<span className="inline-block origin-right scale-x-[1.3]">-</span>0.008
          <Arrow className="ml-[16px] h-8 w-5" />
        </span>
      </div>
      <MacdChart />
      <div className="grid h-[59px] grid-cols-3 items-center px-3 text-[39px] text-[#999]">
        <span>09:30</span>
        <span className="pl-[27px]">11:30/13:00</span>
        <span className="text-right">15:30</span>
      </div>
      <footer className="grid h-[109px] grid-cols-3 items-center border-t-2 border-[#d8dbd8] bg-[#f7f8fa] text-[45px] text-[#dd5a14]">
        <div className="flex items-center justify-center">
          <Chevron left className="mr-[14px]" />
          前一天
        </div>
        <div className="flex items-center justify-center">
          后一天
          <Chevron className="ml-[14px]" />
        </div>
        <div className="text-center text-[#666]">关闭</div>
      </footer>
    </div>
  );
};

export default App;
